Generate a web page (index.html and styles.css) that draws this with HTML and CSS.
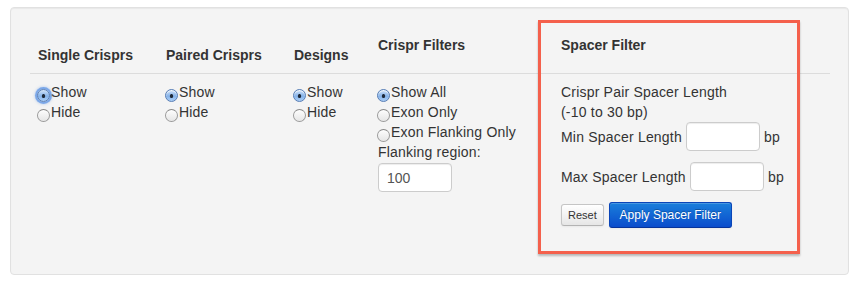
FILE: index.html
```html
<!DOCTYPE html>
<html lang="en">
<head>
  <meta charset="UTF-8">
  <title>Crispr filters</title>
  <link rel="stylesheet" href="styles.css">
</head>
<body>

<!-- filter panel -->
<div class="well">
  <table class="filters">
    <thead>
      <tr>
        <th class="col-single">Single Crisprs</th>
        <th class="col-paired">Paired Crisprs</th>
        <th class="col-designs">Designs</th>
        <th class="col-crispr top">Crispr Filters</th>
        <th class="col-spacer top">Spacer Filter</th>
      </tr>
    </thead>
    <tbody>
      <tr>
        <td>
          <label class="opt"><input type="radio" name="single" class="focus" checked>Show</label>
          <label class="opt"><input type="radio" name="single">Hide</label>
        </td>
        <td>
          <label class="opt"><input type="radio" name="paired" checked>Show</label>
          <label class="opt"><input type="radio" name="paired">Hide</label>
        </td>
        <td>
          <label class="opt"><input type="radio" name="designs" checked>Show</label>
          <label class="opt"><input type="radio" name="designs">Hide</label>
        </td>
        <td>
          <label class="opt"><input type="radio" name="crispr" checked>Show All</label>
          <label class="opt"><input type="radio" name="crispr">Exon Only</label>
          <label class="opt"><input type="radio" name="crispr">Exon Flanking Only</label>
          <div class="field-label">Flanking region:</div>
          <input type="text" class="text-input flank" value="100">
        </td>
        <td>
          <div>Crispr Pair Spacer Length</div>
          <div>(-10 to 30 bp)</div>
          <div class="spacer-row">Min Spacer Length <input type="text" class="text-input spacer"> bp</div>
          <div class="spacer-row">Max Spacer Length <input type="text" class="text-input spacer"> bp</div>
          <div class="actions">
            <button class="btn btn-mini">Reset</button>
            <button class="btn btn-primary">Apply Spacer Filter</button>
          </div>
        </td>
      </tr>
    </tbody>
  </table>

  <!-- highlight box -->
  <div class="highlight"></div>
</div>

</body>
</html>
```

FILE: styles.css
```css
body {
  margin: 7px 12px 0 10px;
  font-family: "Liberation Sans", Arial, sans-serif;
  font-size: 14px;
  line-height: 20px;
  color: #333;
}

.well {
  position: relative;
  background-color: #f4f4f4;
  border: 1px solid #e1e1e1;
  border-radius: 4px;
  box-shadow: inset 0 1px 1px rgba(0,0,0,0.05);
  padding: 19px 19px 38px 19px;
}

table.filters {
  width: 800px;
  border-collapse: collapse;
  border-spacing: 0;
  table-layout: fixed;
}
table.filters th,
table.filters td {
  padding: 8px;
  text-align: left;
  vertical-align: top;
}
table.filters td { letter-spacing: 0.2px; }
table.filters th {
  padding-top: 18px;
  font-weight: bold;
  vertical-align: bottom;
  border-bottom: 1px solid #dcdcdc;
}
table.filters th.top {
  padding-top: 8px;
  vertical-align: top;
}
.col-single, .col-paired { width: 112px; }
.col-designs { width: 68px; }
.col-crispr { width: 167px; }
.col-spacer { width: 261px; }

/* radios */
label.opt { display: block; white-space: nowrap; }
label.opt input {
  appearance: none;
  -webkit-appearance: none;
  box-sizing: border-box;
  width: 13px;
  height: 13px;
  margin: 0 1px 0 -1px;
  vertical-align: -5px;
  border-radius: 50%;
  border: 1px solid #9a9a9a;
  border-top-color: #888;
  background: linear-gradient(#fdfdfd, #e6e6e6);
  box-shadow: inset 0 1px 1px rgba(255,255,255,0.8);
}
label.opt input:checked {
  border-color: #5a7fb5;
  background:
    radial-gradient(circle at 50% 55%, #1f2a3a 0, #1f2a3a 1.6px, transparent 2.1px),
    linear-gradient(#d3e4f8, #86b3ea 55%, #a9cdf6);
}
label.opt input.focus {
  box-shadow: 0 0 0 2px rgba(96,150,230,0.7), 0 0 3px 2px rgba(96,150,230,0.5);
}

.text-input {
  box-sizing: border-box;
  height: 29px;
  padding: 4px 8px;
  font-family: "Liberation Sans", Arial, sans-serif;
  font-size: 14px;
  color: #555;
  background: #fff;
  border: 1px solid #ccc;
  border-radius: 4px;
  box-shadow: inset 0 1px 1px rgba(0,0,0,0.075);
  outline: none;
}
.text-input.flank {
  display: block;
  width: 74px;
  margin-top: 1px;
}
.text-input.spacer {
  width: 74px;
  margin-bottom: 10px;
  vertical-align: baseline;
}
.spacer-row { height: 40px; white-space: nowrap; }

.actions {
  display: flex;
  align-items: center;
  gap: 5px;
  letter-spacing: 0;
}
.btn {
  font-family: "Liberation Sans", Arial, sans-serif;
  border-radius: 3px;
  cursor: pointer;
  margin: 0;
}
.btn-mini {
  height: 22px;
  padding: 0 6px;
  font-size: 11px;
  color: #333;
  border: 1px solid #c5c5c5;
  border-bottom-color: #b3b3b3;
  background: linear-gradient(#ffffff, #e6e6e6);
  box-shadow: inset 0 1px 0 rgba(255,255,255,0.2), 0 1px 2px rgba(0,0,0,0.05);
}
.btn-primary {
  height: 26px;
  width: 123px;
  padding: 0;
  font-size: 12px;
  color: #fff;
  text-shadow: 0 -1px 0 rgba(0,0,0,0.25);
  border: 1px solid #0a45b8;
  border-bottom-color: #06339a;
  background: linear-gradient(#1a7fdb, #0a4ccc);
  box-shadow: inset 0 1px 0 rgba(255,255,255,0.2), 0 1px 2px rgba(0,0,0,0.05);
}

.highlight {
  position: absolute;
  left: 527px;
  top: 12px;
  width: 262px;
  height: 234px;
  box-sizing: border-box;
  border: 3px solid #f4604c;
  box-shadow: 0 2px 2px rgba(0,0,0,0.25);
  pointer-events: none;
}
```
